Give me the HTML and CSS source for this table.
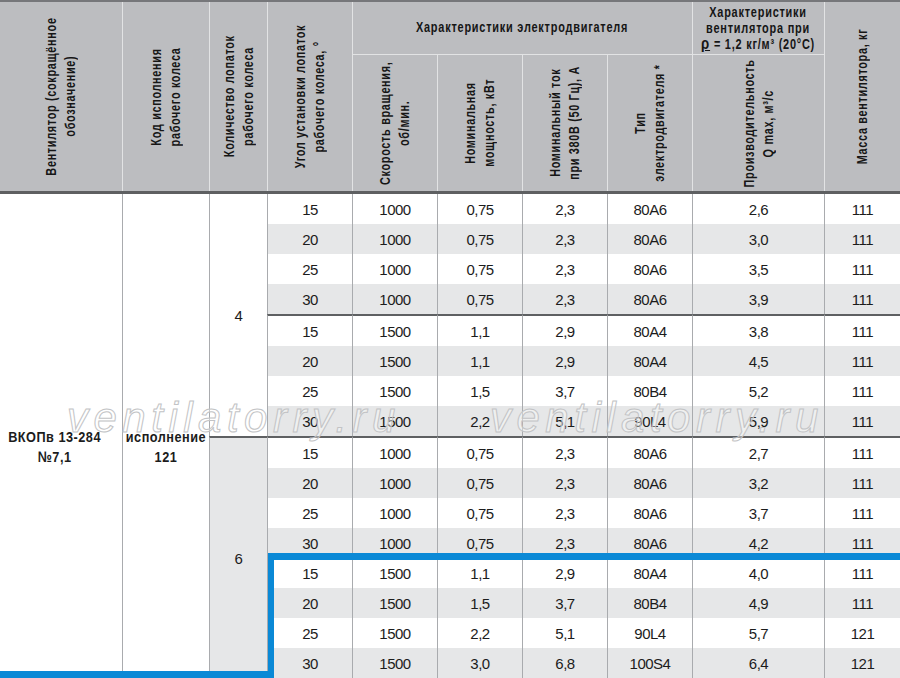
FILE: index.html
```html
<!DOCTYPE html>
<html lang="ru">
<head>
<meta charset="utf-8">
<link rel="stylesheet" href="styles.css">
</head>
<body>
<div class="page">
  <div class="head">
    <div class="hc c1"><span class="vt">Вентилятор (сокращённое<br>обозначение)</span></div>
    <div class="hc c2"><span class="vt">Код исполнения<br>рабочего колеса</span></div>
    <div class="hc c3"><span class="vt">Количество лопаток<br>рабочего колеса</span></div>
    <div class="hc c4"><span class="vt">Угол установки лопаток<br>рабочего колеса, °</span></div>
    <div class="hc grp motor"><span class="hx">Характеристики электродвигателя</span></div>
    <div class="hc grp fan"><span class="hx">Характеристики<br>вентилятора при<br><span class="rho">ρ</span> = 1,2 кг/м³ (20°С)</span></div>
    <div class="hc c10"><span class="vt">Масса вентилятора, кг</span></div>
    <div class="hc s5"><span class="vt">Скорость вращения,<br>об/мин.</span></div>
    <div class="hc s6"><span class="vt">Номинальная<br>мощность, кВт</span></div>
    <div class="hc s7"><span class="vt">Номинальный ток<br>при 380В (50 Гц), А</span></div>
    <div class="hc s8"><span class="vt">Тип<br>электродвигателя <span class="ast">*</span></span></div>
    <div class="hc s9"><span class="vt">Производительность<br>Q max, м³/с</span></div>
  </div>

  <div class="body">
    <div class="bc name"><span class="bx">ВКОПв 13-284<br>№7,1</span></div>
    <div class="bc code"><span class="bx">исполнение<br>121</span></div>
    <div class="bc blades b4">4</div>
    <div class="bc blades b6">6</div>

    <div class="row"><div>15</div><div>1000</div><div>0,75</div><div>2,3</div><div>80А6</div><div>2,6</div><div>111</div></div>
    <div class="row alt"><div>20</div><div>1000</div><div>0,75</div><div>2,3</div><div>80А6</div><div>3,0</div><div>111</div></div>
    <div class="row"><div>25</div><div>1000</div><div>0,75</div><div>2,3</div><div>80А6</div><div>3,5</div><div>111</div></div>
    <div class="row alt"><div>30</div><div>1000</div><div>0,75</div><div>2,3</div><div>80А6</div><div>3,9</div><div>111</div></div>
    <div class="row sep"><div>15</div><div>1500</div><div>1,1</div><div>2,9</div><div>80А4</div><div>3,8</div><div>111</div></div>
    <div class="row alt"><div>20</div><div>1500</div><div>1,1</div><div>2,9</div><div>80А4</div><div>4,5</div><div>111</div></div>
    <div class="row"><div>25</div><div>1500</div><div>1,5</div><div>3,7</div><div>80В4</div><div>5,2</div><div>111</div></div>
    <div class="row alt"><div>30</div><div>1500</div><div>2,2</div><div>5,1</div><div>90L4</div><div>5,9</div><div>111</div></div>
    <div class="row sep"><div>15</div><div>1000</div><div>0,75</div><div>2,3</div><div>80А6</div><div>2,7</div><div>111</div></div>
    <div class="row alt"><div>20</div><div>1000</div><div>0,75</div><div>2,3</div><div>80А6</div><div>3,2</div><div>111</div></div>
    <div class="row"><div>25</div><div>1000</div><div>0,75</div><div>2,3</div><div>80А6</div><div>3,7</div><div>111</div></div>
    <div class="row alt"><div>30</div><div>1000</div><div>0,75</div><div>2,3</div><div>80А6</div><div>4,2</div><div>111</div></div>
    <div class="row"><div>15</div><div>1500</div><div>1,1</div><div>2,9</div><div>80А4</div><div>4,0</div><div>111</div></div>
    <div class="row alt"><div>20</div><div>1500</div><div>1,5</div><div>3,7</div><div>80В4</div><div>4,9</div><div>111</div></div>
    <div class="row"><div>25</div><div>1500</div><div>2,2</div><div>5,1</div><div>90L4</div><div>5,7</div><div>121</div></div>
    <div class="row alt"><div>30</div><div>1500</div><div>3,0</div><div>6,8</div><div>100S4</div><div>6,4</div><div>121</div></div>
  </div>

  <div class="wm wm1">ventilatorry.ru</div>
  <div class="wm wm2">ventilatorry.ru</div>

  <div class="hl hl-top"></div>
  <div class="hl hl-left"></div>
  <div class="hl hl-bottom"></div>
</div>
</body>
</html>
```

FILE: styles.css
```css
html, body {
  margin: 0;
  padding: 0;
  background: #ffffff;
}

.page {
  position: relative;
  width: 900px;
  height: 678px;
  overflow: hidden;
  font-family: "Liberation Sans", Arial, sans-serif;
  color: #1e1e1e;
}

/* ---------- header ---------- */
.head {
  display: grid;
  grid-template-columns: 122px 87px 58px 85px 85px 85px 85px 85px 132px 76px;
  grid-template-rows: 53px 136px;
  background: #bcbdc0;
  border-top: 2px solid #76777a;
  border-bottom: 3px solid #5e5f61;
  font-weight: bold;
  font-size: 14px;
  color: #161616;
}

.hc {
  box-sizing: border-box;
  display: flex;
  align-items: center;
  justify-content: center;
  text-align: center;
  border-left: 1px solid #e2e3e4;
  min-width: 0;
}

.c1 { grid-column: 1; grid-row: 1 / 3; border-left: none; }
.c2 { grid-column: 2; grid-row: 1 / 3; }
.c3 { grid-column: 3; grid-row: 1 / 3; }
.c4 { grid-column: 4; grid-row: 1 / 3; }
.motor { grid-column: 5 / 9; grid-row: 1; }
.fan { grid-column: 9; grid-row: 1; line-height: 16px; }
.c10 { grid-column: 10; grid-row: 1 / 3; }
.s5 { grid-column: 5; grid-row: 2; }
.s6 { grid-column: 6; grid-row: 2; }
.s7 { grid-column: 7; grid-row: 2; }
.s8 { grid-column: 8; grid-row: 2; }
.s9 { grid-column: 9; grid-row: 2; }

.grp {
  border-bottom: 1px solid #e2e3e4;
}

.hx {
  display: inline-block;
  white-space: nowrap;
  letter-spacing: 1px;
  transform: scaleX(0.78);
  flex-shrink: 0;
}

.motor .hx {
  padding-bottom: 2px;
}

.rho {
  font-size: 17px;
  text-decoration: underline;
  text-decoration-thickness: 1px;
}

.vt {
  writing-mode: vertical-rl;
  transform: rotate(180deg) scaleY(0.75);
  font-size: 14.5px;
  line-height: 19px;
  letter-spacing: 0.9px;
  text-align: center;
  white-space: nowrap;
  flex-shrink: 0;
}

.ast {
  font-size: 14px;
}

/* ---------- body ---------- */
.body {
  display: grid;
  grid-template-columns: 122px 87px 58px 85px 85px 85px 85px 85px 132px 76px;
  grid-template-rows: repeat(4, 30px) 32px repeat(3, 30px) 32px repeat(7, 30px);
  font-size: 15px;
  letter-spacing: -0.5px;
  color: #1c1c1c;
}

.bc {
  box-sizing: border-box;
  display: flex;
  align-items: center;
  justify-content: center;
  text-align: center;
}

.bx {
  display: inline-block;
  white-space: nowrap;
  font-weight: bold;
  font-size: 15.5px;
  letter-spacing: 0.6px;
  line-height: 20px;
  transform: scaleX(0.82);
  flex-shrink: 0;
}

.name {
  grid-column: 1;
  grid-row: 1 / 17;
  padding: 22px 12px 0 0;
}

.code {
  grid-column: 2;
  grid-row: 1 / 17;
  padding-top: 22px;
  border-left: 1px solid #a9abae;
}

.blades {
  grid-column: 3;
  border-left: 1px solid #a9abae;
}

.b4 {
  grid-row: 1 / 9;
}

.b6 {
  grid-row: 9 / 17;
  background: #e6e7e8;
  border-top: 2px solid #5e6062;
}

.row {
  display: contents;
}

.row > div {
  box-sizing: border-box;
  display: flex;
  align-items: center;
  justify-content: center;
  border-left: 1px solid #a9abae;
  background: #ffffff;
}

.row.alt > div {
  background: #e6e7e8;
}

.row.sep > div {
  border-top: 2px solid #5e6062;
}

/* ---------- watermark ---------- */
.wm {
  position: absolute;
  top: 397px;
  font-family: "Liberation Sans", sans-serif;
  font-style: italic;
  font-size: 42px;
  line-height: 42px;
  letter-spacing: 5.5px;
  color: rgba(255, 255, 255, 0.4);
  -webkit-text-stroke: 1px #c2c3c5;
  pointer-events: none;
  white-space: nowrap;
}

.wm1 { left: 67px; }
.wm2 { left: 490px; }

/* ---------- highlight frame ---------- */
.hl {
  position: absolute;
  background: #0a89d6;
}

.hl-top {
  left: 268px;
  top: 553px;
  width: 632px;
  height: 7px;
}

.hl-left {
  left: 268px;
  top: 553px;
  width: 6px;
  height: 125px;
}

.hl-bottom {
  left: 0;
  top: 671px;
  width: 274px;
  height: 7px;
}
```
